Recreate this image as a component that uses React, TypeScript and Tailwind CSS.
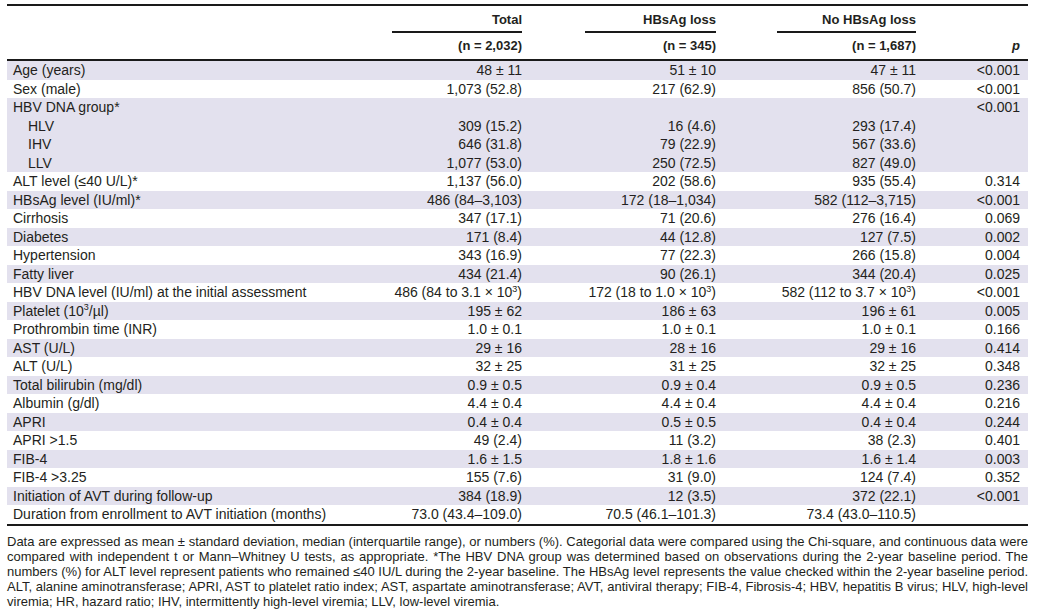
import React from "react";

type Row = {
  label: React.ReactNode;
  total?: React.ReactNode;
  loss?: React.ReactNode;
  noLoss?: React.ReactNode;
  p?: string;
  shaded?: boolean;
  indent?: boolean;
};

const sup3 = <sup className="text-[9px] top-[-0.6em]">3</sup>;

const rows: Row[] = [
  { label: "Age (years)", total: "48 ± 11", loss: "51 ± 10", noLoss: "47 ± 11", p: "<0.001", shaded: true },
  { label: "Sex (male)", total: "1,073 (52.8)", loss: "217 (62.9)", noLoss: "856 (50.7)", p: "<0.001" },
  { label: "HBV DNA group*", p: "<0.001", shaded: true },
  { label: "HLV", total: "309 (15.2)", loss: "16 (4.6)", noLoss: "293 (17.4)", shaded: true, indent: true },
  { label: "IHV", total: "646 (31.8)", loss: "79 (22.9)", noLoss: "567 (33.6)", shaded: true, indent: true },
  { label: "LLV", total: "1,077 (53.0)", loss: "250 (72.5)", noLoss: "827 (49.0)", shaded: true, indent: true },
  { label: "ALT level (≤40 U/L)*", total: "1,137 (56.0)", loss: "202 (58.6)", noLoss: "935 (55.4)", p: "0.314" },
  { label: "HBsAg level (IU/ml)*", total: "486 (84–3,103)", loss: "172 (18–1,034)", noLoss: "582 (112–3,715)", p: "<0.001", shaded: true },
  { label: "Cirrhosis", total: "347 (17.1)", loss: "71 (20.6)", noLoss: "276 (16.4)", p: "0.069" },
  { label: "Diabetes", total: "171 (8.4)", loss: "44 (12.8)", noLoss: "127 (7.5)", p: "0.002", shaded: true },
  { label: "Hypertension", total: "343 (16.9)", loss: "77 (22.3)", noLoss: "266 (15.8)", p: "0.004" },
  { label: "Fatty liver", total: "434 (21.4)", loss: "90 (26.1)", noLoss: "344 (20.4)", p: "0.025", shaded: true },
  {
    label: "HBV DNA level (IU/ml) at the initial assessment",
    total: <>486 (84 to 3.1 × 10{sup3})</>,
    loss: <>172 (18 to 1.0 × 10{sup3})</>,
    noLoss: <>582 (112 to 3.7 × 10{sup3})</>,
    p: "<0.001",
  },
  { label: <>Platelet (10{sup3}/µl)</>, total: "195 ± 62", loss: "186 ± 63", noLoss: "196 ± 61", p: "0.005", shaded: true },
  { label: "Prothrombin time (INR)", total: "1.0 ± 0.1", loss: "1.0 ± 0.1", noLoss: "1.0 ± 0.1", p: "0.166" },
  { label: "AST (U/L)", total: "29 ± 16", loss: "28 ± 16", noLoss: "29 ± 16", p: "0.414", shaded: true },
  { label: "ALT (U/L)", total: "32 ± 25", loss: "31 ± 25", noLoss: "32 ± 25", p: "0.348" },
  { label: "Total bilirubin (mg/dl)", total: "0.9 ± 0.5", loss: "0.9 ± 0.4", noLoss: "0.9 ± 0.5", p: "0.236", shaded: true },
  { label: "Albumin (g/dl)", total: "4.4 ± 0.4", loss: "4.4 ± 0.4", noLoss: "4.4 ± 0.4", p: "0.216" },
  { label: "APRI", total: "0.4 ± 0.4", loss: "0.5 ± 0.5", noLoss: "0.4 ± 0.4", p: "0.244", shaded: true },
  { label: "APRI >1.5", total: "49 (2.4)", loss: "11 (3.2)", noLoss: "38 (2.3)", p: "0.401" },
  { label: "FIB-4", total: "1.6 ± 1.5", loss: "1.8 ± 1.6", noLoss: "1.6 ± 1.4", p: "0.003", shaded: true },
  { label: "FIB-4 >3.25", total: "155 (7.6)", loss: "31 (9.0)", noLoss: "124 (7.4)", p: "0.352" },
  { label: "Initiation of AVT during follow-up", total: "384 (18.9)", loss: "12 (3.5)", noLoss: "372 (22.1)", p: "<0.001", shaded: true },
  { label: "Duration from enrollment to AVT initiation (months)", total: "73.0 (43.4–109.0)", loss: "70.5 (46.1–101.3)", noLoss: "73.4 (43.0–110.5)" },
];

const notes = [
  "Data are expressed as mean ± standard deviation, median (interquartile range), or numbers (%). Categorial data were compared using the Chi-square, and continuous data were",
  "compared with independent t or Mann–Whitney U tests, as appropriate. *The HBV DNA group was determined based on observations during the 2-year baseline period. The",
  "numbers (%) for ALT level represent patients who remained ≤40 IU/L during the 2-year baseline. The HBsAg level represents the value checked within the 2-year baseline period.",
  "ALT, alanine aminotransferase; APRI, AST to platelet ratio index; AST, aspartate aminotransferase; AVT, antiviral therapy; FIB-4, Fibrosis-4; HBV, hepatitis B virus; HLV, high-level",
];

const cols = "grid grid-cols-[1fr_130px_194px_200px_104px] pr-[8px]";

export default function App() {
  return (
    <div className="w-[1043px] h-[613px] bg-white text-[#231f20] font-['Liberation_Sans',Arial,sans-serif] pt-[4px]">
      <div className="ml-[7px] w-[1021px]">
        {/* header */}
        <div className="border-t-2 border-[#1a1a1a]">
          <div className={`${cols} pt-[5px] font-bold text-[13px] leading-[18px]`}>
            <div />
            <div className="flex flex-col items-end">
              <span>Total</span>
              <div className="mt-[2px] h-[2px] w-full bg-[#1a1a1a]" />
            </div>
            <div className="flex flex-col items-end">
              <span>HBsAg loss</span>
              <div className="mt-[2px] h-[2px] w-[131px] bg-[#1a1a1a]" />
            </div>
            <div className="flex flex-col items-end">
              <span>No HBsAg loss</span>
              <div className="mt-[2px] h-[2px] w-[139px] bg-[#1a1a1a]" />
            </div>
            <div />
          </div>
          <div className={`${cols} py-[4px] font-bold text-[13px] leading-[18px] border-b-2 border-[#1a1a1a]`}>
            <div />
            <div className="text-right">(n = 2,032)</div>
            <div className="text-right">(n = 345)</div>
            <div className="text-right">(n = 1,687)</div>
            <div className="text-right italic">p</div>
          </div>
        </div>

        {/* body */}
        <div className="border-b-2 border-[#1a1a1a]">
          {rows.map((r, i) => (
            <div
              key={i}
              className={`${cols} h-[18.5px] text-[14px] leading-[18.5px] whitespace-nowrap ${r.shaded ? "bg-[#e3e1ee]" : "bg-white"}`}
            >
              <div className={r.indent ? "pl-[21px]" : "pl-[6px]"}>{r.label}</div>
              <div className="text-right">{r.total}</div>
              <div className="text-right">{r.loss}</div>
              <div className="text-right">{r.noLoss}</div>
              <div className="text-right">{r.p}</div>
            </div>
          ))}
        </div>

        {/* footnote */}
        <div className="mt-[8px] text-[13px] leading-[15px]">
          {notes.map((n, i) => (
            <p key={i} className="text-justify [text-align-last:justify] whitespace-nowrap">
              {n}
            </p>
          ))}
          <p>viremia; HR, hazard ratio; IHV, intermittently high-level viremia; LLV, low-level viremia.</p>
        </div>
      </div>
    </div>
  );
}
